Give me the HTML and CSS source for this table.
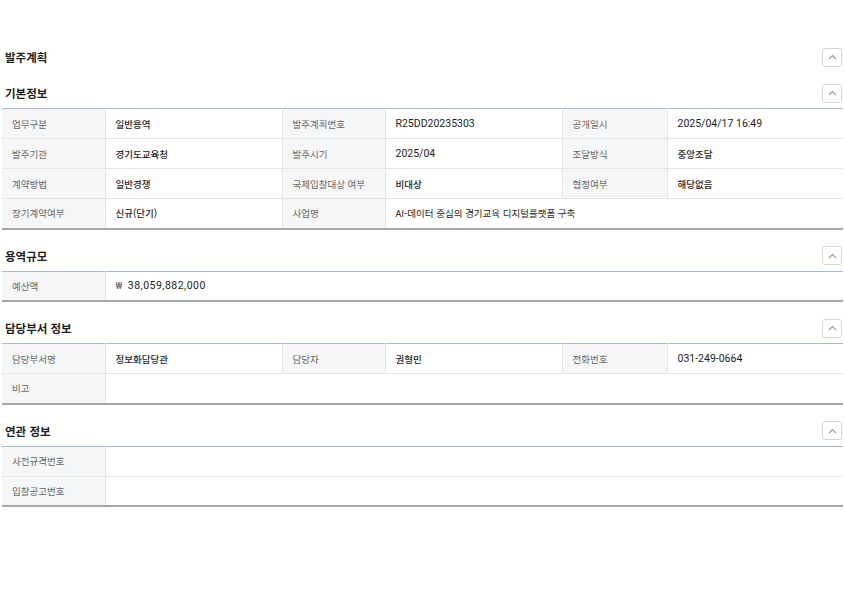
FILE: index.html
```html
<!DOCTYPE html>
<html lang="ko">
<head>
<meta charset="utf-8">
<title>발주계획</title>
<link rel="stylesheet" href="styles.css">
</head>
<body>
<div class="page">
  <div class="head main">
    <h2 class="title">발주계획</h2>
    <button class="toggle" aria-label="접기"><svg width="9" height="6" viewBox="0 0 9 6"><polyline points="1,5 4.5,1.5 8,5" fill="none" stroke="#9a9a9a" stroke-width="1.2"/></svg></button>
  </div>

  <section class="sec">
    <div class="head">
      <h3 class="title">기본정보</h3>
      <button class="toggle" aria-label="접기"><svg width="9" height="6" viewBox="0 0 9 6"><polyline points="1,5 4.5,1.5 8,5" fill="none" stroke="#9a9a9a" stroke-width="1.2"/></svg></button>
    </div>
    <table class="grid">
      <colgroup><col class="c-lab"><col class="c-val"><col class="c-lab"><col class="c-val"><col class="c-lab3"><col></colgroup>
      <tr><th>업무구분</th><td>일반용역</td><th>발주계획번호</th><td class="num">R25DD20235303</td><th>공개일시</th><td class="num">2025/04/17 16:49</td></tr>
      <tr><th>발주기관</th><td>경기도교육청</td><th>발주시기</th><td class="num">2025/04</td><th>조달방식</th><td>중앙조달</td></tr>
      <tr><th>계약방법</th><td>일반경쟁</td><th>국제입찰대상 여부</th><td>비대상</td><th>협정여부</th><td>해당없음</td></tr>
      <tr><th>장기계약여부</th><td>신규(단기)</td><th>사업명</th><td colspan="3" class="plain">AI-데이터 중심의 경기교육 디지털플랫폼 구축</td></tr>
    </table>
  </section>

  <section class="sec">
    <div class="head">
      <h3 class="title">용역규모</h3>
      <button class="toggle" aria-label="접기"><svg width="9" height="6" viewBox="0 0 9 6"><polyline points="1,5 4.5,1.5 8,5" fill="none" stroke="#9a9a9a" stroke-width="1.2"/></svg></button>
    </div>
    <table class="grid">
      <colgroup><col class="c-lab"><col></colgroup>
      <tr><th>예산액</th><td class="num wide"><span class="won">₩</span> 38,059,882,000</td></tr>
    </table>
  </section>

  <section class="sec">
    <div class="head">
      <h3 class="title">담당부서 정보</h3>
      <button class="toggle" aria-label="접기"><svg width="9" height="6" viewBox="0 0 9 6"><polyline points="1,5 4.5,1.5 8,5" fill="none" stroke="#9a9a9a" stroke-width="1.2"/></svg></button>
    </div>
    <table class="grid">
      <colgroup><col class="c-lab"><col class="c-val"><col class="c-lab"><col class="c-val"><col class="c-lab3"><col></colgroup>
      <tr><th>담당부서명</th><td>정보화담당관</td><th>담당자</th><td>권형민</td><th>전화번호</th><td class="num">031-249-0664</td></tr>
      <tr><th>비고</th><td colspan="5"></td></tr>
    </table>
  </section>

  <section class="sec">
    <div class="head">
      <h3 class="title">연관 정보</h3>
      <button class="toggle" aria-label="접기"><svg width="9" height="6" viewBox="0 0 9 6"><polyline points="1,5 4.5,1.5 8,5" fill="none" stroke="#9a9a9a" stroke-width="1.2"/></svg></button>
    </div>
    <table class="grid">
      <colgroup><col class="c-lab"><col></colgroup>
      <tr><th>사전규격번호</th><td></td></tr>
      <tr><th>입찰공고번호</th><td></td></tr>
    </table>
  </section>
</div>
</body>
</html>
```

FILE: styles.css
```css
html, body {
  margin: 0;
  padding: 0;
  background: #fff;
}
body {
  font-family: Roboto, "Noto Sans CJK KR", sans-serif;
  color: #222;
}
.page {
  padding: 47px 1px 40px 2px;
}
.head {
  display: flex;
  align-items: center;
  justify-content: space-between;
  height: 20px;
  margin-bottom: 5px;
}
.head.main {
  margin-bottom: 0;
}
.title {
  margin: 0 0 0 3px;
  font-size: 11.5px;
  font-weight: 700;
  color: #1f1f1f;
  font-family: "Noto Sans CJK KR", sans-serif;
}
.toggle {
  width: 20px;
  height: 19px;
  margin: 0 1px 0 0;
  padding: 0;
  border: 1px solid #d6d6d6;
  border-radius: 3px;
  background: #fff;
  display: flex;
  align-items: center;
  justify-content: center;
}
.sec {
  margin-top: 16px;
}
.grid {
  width: 100%;
  border-collapse: collapse;
  table-layout: fixed;
  border-top: 1px solid #a9b5e4;
  border-bottom: 2px solid #a6a6a6;
}
.c-lab { width: 103px; }
.c-val { width: 177px; }
.c-lab3 { width: 105px; }
.grid tr {
  height: 30px;
}
.grid th, .grid td {
  padding: 0 0 0 10px;
  text-align: left;
  vertical-align: middle;
  border-bottom: 1px solid #e4e4e4;
  border-left: 1px solid #e4e4e4;
  white-space: nowrap;
  overflow: hidden;
}
.grid tr:last-child th, .grid tr:last-child td {
  border-bottom: none;
}
.grid th:first-child {
  border-left: none;
}
.grid th {
  background: #f5f6f8;
  font-family: "Noto Sans CJK KR", sans-serif;
  font-size: 9.5px;
  font-weight: 400;
  color: #666;
}
.grid td {
  background: #fff;
  font-family: "Noto Sans CJK KR", sans-serif;
  font-size: 9.5px;
  font-weight: 500;
  color: #1e1e1e;
}
.grid td.plain {
  font-weight: 400;
}
.grid td.num {
  font-family: Roboto, "Noto Sans CJK KR", sans-serif;
  font-size: 10.5px;
  font-weight: 400;
}
.grid td.wide {
  letter-spacing: 0.5px;
}
.won {
  font-size: 9px;
  color: #555;
  margin-right: 2px;
}
```
